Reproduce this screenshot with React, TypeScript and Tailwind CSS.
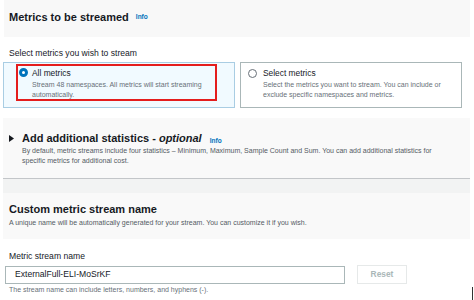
import React from "react";

const Info = () => (
  <span className="ml-[7px] text-[6.5px] font-bold text-[#0073bb]">Info</span>
);

export default function App() {
  return (
    <div
      className="w-[474px] h-[300px] overflow-hidden bg-white text-[#16191f]"
      style={{ fontFamily: '"Liberation Sans", Arial, sans-serif' }}
    >
      {/* header */}
      <div className="ml-[4px] w-[466px] h-[37px] bg-[#f8f8f8] flex items-center pl-[5px] pb-[3px]">
        <span className="text-[11px] font-bold leading-[14px]">Metrics to be streamed</span>
        <Info />
      </div>

      <div className="mt-[10px] pl-[9px] text-[8.6px] leading-[12px]">
        Select metrics you wish to stream
      </div>

      {/* tiles */}
      <div className="mt-[3px] ml-[3px] flex gap-[5px]">
        <div className="w-[232px] h-[46px] border border-[#a9cde3] bg-[#f1faff] pl-[12px] pt-[1px]">
          <div className="w-[201px] h-[37px] border-2 border-[#e41d1d] flex pl-[1px] pt-[1.5px]">
            <div className="w-[9px] h-[9px] rounded-full border-[3px] border-[#0073bb] bg-white shrink-0" />
            <div className="ml-[4px] -mt-[1px]">
              <div className="text-[8.4px] leading-[13px]">All metrics</div>
              <div className="text-[7px] leading-[10px] text-[#687078]">
                Stream 48 namespaces. All metrics will start streaming automatically.
              </div>
            </div>
          </div>
        </div>
        <div className="w-[222px] h-[46px] border border-[#aab7b8] bg-white flex pl-[7px] pt-[6px] pr-[8px]">
          <div className="w-[9px] h-[9px] rounded-full border border-[#687078] bg-white shrink-0" />
          <div className="ml-[6px] -mt-[2px]">
            <div className="text-[8.4px] leading-[13px]">Select metrics</div>
            <div className="text-[7px] leading-[9.5px] text-[#687078]">
              Select the metrics you want to stream. You can include or exclude specific namespaces and metrics.
            </div>
          </div>
        </div>
      </div>

      {/* additional statistics */}
      <div className="mt-[10px] ml-[3px] w-[467px] h-[60px] bg-[#f9f9f9] pl-[6px] pt-[13px]">
        <div className="flex items-center h-[14px]">
          <svg width="5" height="7" viewBox="0 0 5 7" className="mr-[8px]">
            <path d="M0 0 L5 3.5 L0 7 Z" fill="#16191f" />
          </svg>
          <span className="text-[11px] font-bold leading-[14px]">
            Add additional statistics - <i>optional</i>
          </span>
          <span className="ml-[1px]"><Info /></span>
        </div>
        <div className="ml-[13px] mt-[1px] text-[7px] leading-[10px] text-[#545b64] pr-[20px]">
          By default, metric streams include four statistics – Minimum, Maximum, Sample Count and Sum. You can add additional statistics for specific metrics for additional cost.
        </div>
      </div>
      <div className="ml-[3px] w-[467px] h-px bg-[#c3c6c9]" />
      <div className="ml-[3px] w-[467px] h-[14px] bg-[#f2f3f3]" />

      {/* custom name header */}
      <div className="ml-[3px] w-[467px] h-[46px] bg-[#f9f9f9] pl-[6px] pt-[9px]">
        <div className="text-[11px] font-bold leading-[14px]">Custom metric stream name</div>
        <div className="mt-[2px] text-[7px] leading-[10px] text-[#545b64]">
          A unique name will be automatically generated for your stream. You can customize it if you wish.
        </div>
      </div>

      <div className="mt-[11px] pl-[9px] text-[8.6px] leading-[12px]">Metric stream name</div>
      <div className="mt-[3px] ml-[5px] flex items-center">
        <div className="w-[340px] h-[18px] border border-[#aab7b8] flex items-center pl-[9px] text-[8.6px]">
          ExternalFull-ELI-MoSrKF
        </div>
        <div className="ml-[12px] w-[50px] h-[19px] border border-[#e6e9e9] flex items-center justify-center text-[8.4px] font-bold text-[#aab7b8]">
          Reset
        </div>
      </div>
      <div className="mt-[1px] pl-[9px] pr-[1px] flex justify-between items-start">
        <span className="text-[7px] leading-[10px] text-[#687078]">
          The stream name can include letters, numbers, and hyphens (-).
        </span>
        <span className="mt-[2px] w-px h-[14px] bg-[#333]" />
      </div>
    </div>
  );
}
